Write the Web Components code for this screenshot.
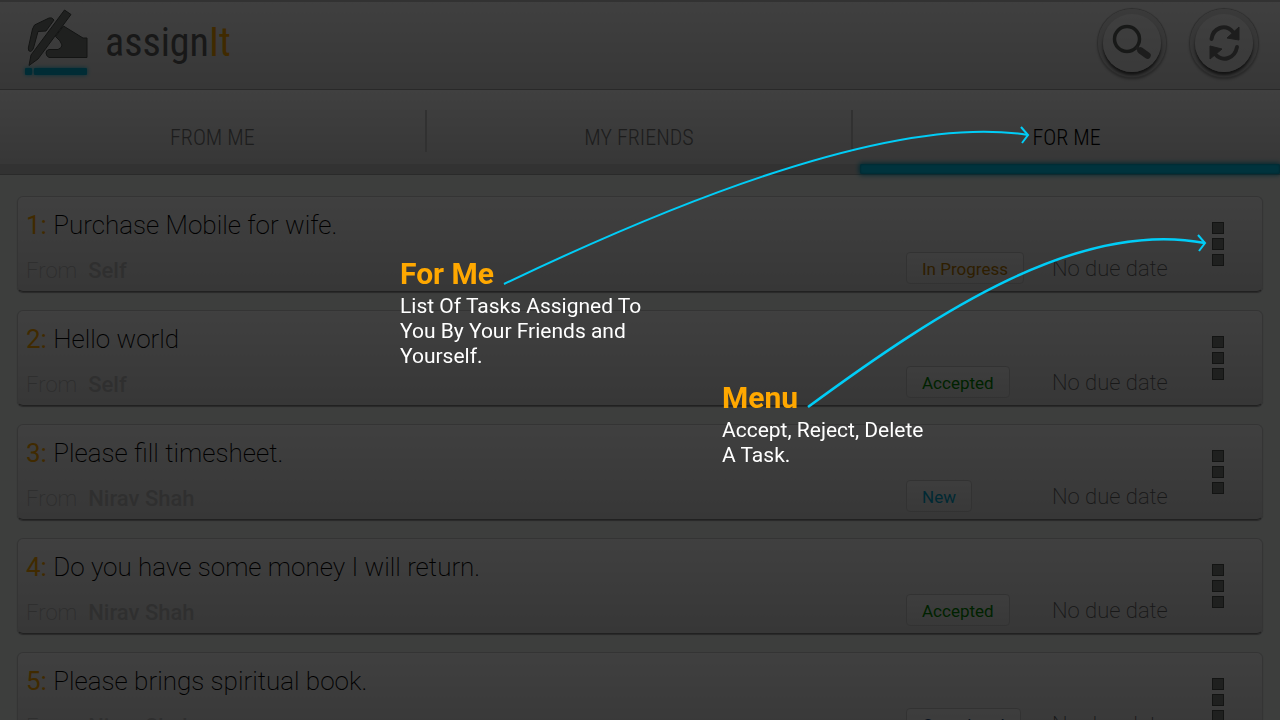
<!DOCTYPE html>
<html lang="en">
<head>
<meta charset="utf-8">
<meta name="viewport" content="width=device-width, initial-scale=1">
<title>assignIt</title>
<style>
  body { margin: 0; background: #f1f6f3; font-family: Roboto, "Liberation Sans", sans-serif; }
</style>
</head>
<body>
<assign-app></assign-app>

<script>
class BaseElement extends HTMLElement {
  constructor() {
    super();
    this.attachShadow({ mode: 'open' });
  }
  connectedCallback() {
    this.shadowRoot.innerHTML = this.render();
  }
}

customElements.define('round-button', class extends BaseElement {
  render() {
    return `
    <style>
      :host { display: block; }
      button { display: grid; place-items: center; box-sizing: border-box; width: 68px; height: 68px; margin: 0; padding: 0;
        border: 0; border-radius: 50%; background: linear-gradient(#e6e6e6, #c4c4c4); color: #747474;
        box-shadow: 0 0 1px 1px #b0b0b0, 0 2px 3px #888; }
      .face { display: grid; place-items: center; width: 58px; height: 58px; border-radius: 50%;
        background: linear-gradient(#fafafa, #e4e4e4); box-shadow: 0 3px 3px #484848; }
      ::slotted(svg) { display: block; }
    </style>
    <button type="button" aria-label="${this.getAttribute('label')}"><span class="face"><slot></slot></span></button>`;
  }
});

customElements.define('app-header', class extends BaseElement {
  render() {
    return `
    <style>
      :host { display: flex; align-items: center; justify-content: space-between; box-sizing: border-box; height: 90px;
        padding: 0 22px 6px 24px; border-top: 2px solid #c8c8c8; border-bottom: 1px solid #a4a4a4;
        background: linear-gradient(#fdfdfd, #dadada); }
      .brand { display: flex; align-items: center; gap: 17px; }
      h1 { margin: 0; font: 400 40px/56px "Roboto Condensed", Roboto, sans-serif; color: #606060; }
      h1 span { color: #ffa800; }
      .actions { display: flex; gap: 24px; }
      svg { display: block; overflow: visible; }
    </style>
    <div class="brand">
      <svg width="64" height="70" viewBox="24 8 64 70" aria-hidden="true">
        <g fill="#7b807c" stroke="#4c504d" stroke-width="1" stroke-linejoin="round">
          <path d="M49 18 L34.500 25 L32.500 29 L28.300 48 Q28 51.500 30.500 51.500 Q32.500 51 33.500 48 L38 31.500 L46 31 L54 20 Q52 17 49 18Z"/>
          <path d="M63.500 26 L83 38 H87 V57.500 H49 Q46 56 46 53 Q46 50 49 49.500 H58 Q62 48 62 45 Q61 41 55.500 36.500Z"/>
          <path d="M64.500 10 L71 14.500 L38 59 L29 65.500 L31 55Z"/>
        </g>
        <g fill="#00aed2" style="filter:drop-shadow(0 0 2px #00c0e8)">
          <rect x="25" y="68" width="7" height="7" rx="1"/><rect x="34" y="68" width="53" height="7" rx="1"/>
        </g>
      </svg>
      <h1>assign<span>It</span></h1>
    </div>
    <div class="actions">
      <round-button label="Search">
        <svg width="44" height="44" viewBox="0 0 44 44" fill="none" stroke="currentColor">
          <circle cx="17" cy="18" r="12.500" stroke-width="3.500" stroke="#606461"/>
          <path d="M26 26 L31 30" stroke-width="3"/>
          <path d="M30.500 29.500 L37.500 34.500" stroke-width="6.500" stroke-linecap="round" stroke-linejoin="round"/>
        </svg>
      </round-button>
      <round-button label="Refresh">
        <svg width="44" height="44" viewBox="0 0 44 44" fill="none" stroke="currentColor" stroke-width="4">
          <path d="M9.500 18 C11 7 23 2 31 11" stroke-linecap="round"/>
          <path d="M37 6 V19 L25 17Z" fill="currentColor" stroke-width="1"/>
          <path d="M35 26 C33 37 21 42 13 33" stroke-linecap="round"/>
          <path d="M8 38 V25 L20 28Z" fill="currentColor" stroke-width="1"/>
        </svg>
      </round-button>
    </div>`;
  }
});

customElements.define('tab-bar', class extends BaseElement {
  render() {
    return `
    <style>
      :host { display: block; }
      nav { display: grid; grid-template-columns: repeat(3, 1fr); height: 85px; background: linear-gradient(#fefefe, #dadada 74px, #c8c8c8 74px); border-bottom: 1px solid #a8a8a8; box-sizing: border-box; }
    </style>
    <nav role="tablist"><slot></slot></nav>`;
  }
});

customElements.define('tab-item', class extends BaseElement {
  render() {
    const active = this.hasAttribute('active');
    return `
    <style>
      :host { display: grid; grid-template-rows: 74px 10px; }
      button { margin: 20px 0 12px; padding: 12px 0 0; border: 0; border-right: 2px solid #c4c4c4; background: none;
        font: 300 22px/32px "Roboto Condensed", Roboto, sans-serif; color: #747474; }
      :host(:last-of-type) button { border-right: 0; }
      :host([active]) button { color: #000; }
      :host([active])::after { content: ""; margin-left: 7px; border-radius: 2px; background: #00ccf4; box-shadow: 0 0 5px 1px #00a0c0, inset 0 0 2px 1px #00a8c8; }
    </style>
    <button type="button" role="tab" aria-selected="${active}"><slot></slot></button>`;
  }
});

customElements.define('task-card', class extends BaseElement {
  render() {
    return `
    <style>
      :host { display: grid; box-sizing: border-box; height: 96px; grid-template-columns: 1fr 146px 160px 50px;
        grid-template-rows: 55px 33px; padding-left: 8px; border: 1px solid #d0d0d0; border-bottom-color: #848484; border-radius: 6px;
        background: linear-gradient(#fdfdfd, #dadada); box-shadow: 0 1px 1px #a0a0a0; }
      h2 { grid-column: 1 / 4; margin: 0; font-weight: 200; font-size: 26px; line-height: 57px; color: #000; white-space: nowrap; }
      h2 b { font-weight: 400; color: #ffa800; }
      .menu { grid-column: 4; grid-row: 1 / 3; align-self: start; justify-self: start; display: grid; gap: 4px; margin: 25px 0 0; padding: 0; border: 0; background: none; }
      .menu i { box-sizing: border-box; width: 12px; height: 12px; background: #7c807d; border: 1px solid #4c504d; }
      .from { grid-column: 1; margin: 0; font-size: 22px; line-height: 37px; font-weight: 200; color: #b4b4b4; display: flex; gap: 11px; }
      .from b { font-weight: 500; color: #bcbcbc; }
      .status { justify-self: start; box-sizing: border-box; height: 32px; padding: 0 15px; border: 1px solid #c8c8c8; border-radius: 4px;
        background: linear-gradient(#f4f4f4, #e0e0e0); font-size: 17px; line-height: 33px; }
      .date { font-size: 22px; line-height: 33px; font-weight: 200; color: #606060; }
    </style>
    <h2><b>${this.getAttribute('number')}:</b> <slot></slot></h2>
    <button class="menu" type="button" aria-label="Task menu"><i></i><i></i><i></i></button>
    <p class="from">From <b>${this.getAttribute('from')}</b></p>
    <span class="status" style="color:${this.getAttribute('tone')}">${this.getAttribute('status')}</span>
    <span class="date">No due date</span>`;
  }
});

customElements.define('coach-tip', class extends BaseElement {
  render() {
    return `
    <style>
      :host { display: block; position: absolute; }
      h3 { margin: 0; font-weight: 700; font-size: 30px; line-height: 40px; color: #ffa800; }
      p { margin: 0; font-size: 21px; line-height: 25px; color: #fff; }
    </style>
    <h3>${this.getAttribute('heading')}</h3>
    <p><slot></slot></p>`;
  }
});

customElements.define('coach-overlay', class extends BaseElement {
  render() {
    return `
    <style>
      :host { display: block; position: fixed; inset: 0; overflow: hidden; background: rgba(0, 0, 0, .75); }
      svg { position: absolute; top: 0; left: 0; overflow: visible; }
      .tabs { top: 254px; left: 400px; }
      .menu { top: 378px; left: 722px; }
    </style>
    <svg width="1280" height="720" viewBox="0 0 1280 720" fill="none" stroke="#00cdf7" stroke-width="2" aria-hidden="true">
      <path d="M504 284 C690 195 900 114 1028 135"/>
      <path d="M1021 127 L1028 135 L1022 143"/>
      <path d="M808 407 C940 310 1080 219 1205 243" stroke-width="2.500"/>
      <path d="M1198 235 L1205 243 L1199 251"/>
    </svg>
    <coach-tip class="tabs" heading="For Me">List Of Tasks Assigned To<br>You By Your Friends and<br>Yourself.</coach-tip>
    <coach-tip class="menu" heading="Menu">Accept, Reject, Delete<br>A Task.</coach-tip>`;
  }
});

customElements.define('assign-app', class extends BaseElement {
  render() {
    return `
    <style>
      :host { display: flex; flex-direction: column; height: 100vh; overflow: hidden; }
      app-header, tab-bar { flex: none; }
      main { flex: 1; min-height: 0; overflow-y: auto; scrollbar-width: none; display: flex; flex-direction: column; gap: 18px; padding: 21px 17px; }
      task-card { flex: none; }
    </style>
    <app-header></app-header>
    <tab-bar><tab-item>FROM ME</tab-item><tab-item>MY FRIENDS</tab-item><tab-item active>FOR ME</tab-item></tab-bar>
    <main>
      <task-card number="1" from="Self" status="In Progress" tone="#b87800">Purchase Mobile for wife.</task-card>
      <task-card number="2" from="Self" status="Accepted" tone="#008800">Hello world</task-card>
      <task-card number="3" from="Nirav Shah" status="New" tone="#00a4cc">Please fill timesheet.</task-card>
      <task-card number="4" from="Nirav Shah" status="Accepted" tone="#008800">Do you have some money I will return.</task-card>
      <task-card number="5" from="Nirav Shah" status="Completed" tone="#204878">Please brings spiritual book.</task-card>
    </main>
    <coach-overlay></coach-overlay>`;
  }
});
</script>
</body>
</html>
